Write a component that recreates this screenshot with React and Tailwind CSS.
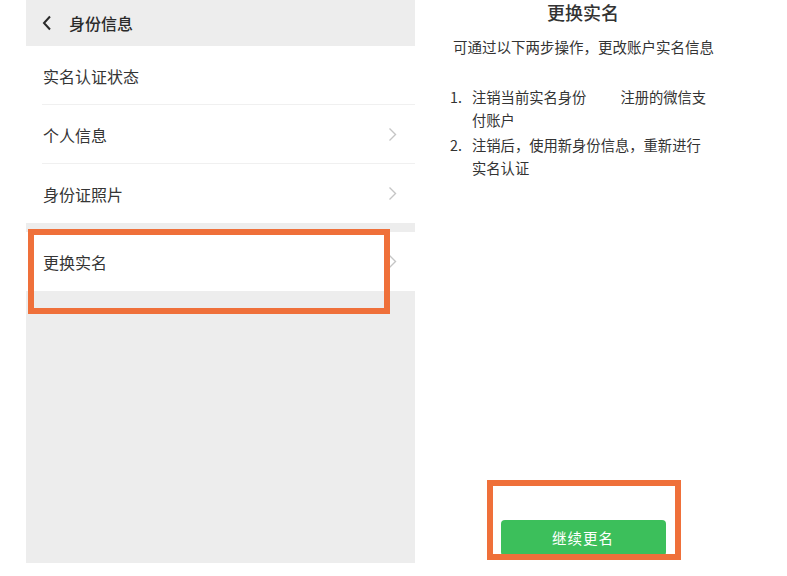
import React from "react";

const Chevron = () => (
  <svg width="9" height="15" viewBox="0 0 9 15" className="shrink-0">
    <polyline points="1.5,1.5 7.5,7.5 1.5,13.5" fill="none" stroke="#c5c5c5" strokeWidth="1.4" />
  </svg>
);

const Row = ({ label, chevron = true, divider = true }) => (
  <div className="relative h-[59px] bg-white flex items-center pl-[17px] pr-[18px]">
    <span className="flex-1 text-[16px] text-[#353535] leading-none">{label}</span>
    {chevron && <Chevron />}
    {divider && <div className="absolute left-[16px] right-0 bottom-0 h-px bg-[#f0f0f0]" />}
  </div>
);

export default function App() {
  return (
    <div
      className="relative w-[787px] h-[576px] bg-white flex overflow-hidden"
      style={{ fontFamily: '"Noto Sans CJK SC", "Noto Sans", sans-serif' }}
    >
      {/* Left panel */}
      <div className="relative ml-[26px] w-[389px] h-[563px] bg-[#ededed] flex flex-col">
        <div className="h-[46px] flex items-center pl-[16px]">
          <svg width="10" height="16" viewBox="0 0 10 16" className="mr-[17px]">
            <polyline points="8,1.5 2,8 8,14.5" fill="none" stroke="#2a2a2a" strokeWidth="2" />
          </svg>
          <span className="text-[16px] font-medium text-[#2a2a2a] leading-none">身份信息</span>
        </div>
        <Row label="实名认证状态" chevron={false} />
        <Row label="个人信息" />
        <Row label="身份证照片" divider={false} />
        <div className="h-[9px]" />
        <Row label="更换实名" divider={false} />
        <div className="absolute left-[2px] top-[229px] w-[362px] h-[85px] border-[6px] border-[#ef703a]" />
      </div>

      {/* Right panel */}
      <div className="relative w-[336px] h-full flex flex-col">
        <div className="pt-[2px] text-center text-[18px] leading-[20px] font-medium text-[#333]">更换实名</div>
        <div className="mt-[15px] pl-[38px] text-[14.5px] leading-[20px] text-[#333]">
          可通过以下两步操作，更改账户实名信息
        </div>
        <div className="mt-[28px] pl-[35px] text-[14.3px] text-[#333]">
          <div className="flex leading-[23px]">
            <span className="w-[22px] shrink-0">1.</span>
            <div>
              <div>
                注销当前实名身份<span className="inline-block w-[34px]" />注册的微信支
              </div>
              <div>付账户</div>
            </div>
          </div>
          <div className="flex leading-[23px] mt-[2px]">
            <span className="w-[22px] shrink-0">2.</span>
            <div>
              <div>注销后，使用新身份信息，重新进行</div>
              <div>实名认证</div>
            </div>
          </div>
        </div>
        <div className="flex-1" />
        <div className="mb-[20px] flex justify-center">
          <button className="w-[165px] h-[36px] rounded-[4px] bg-[#3cbf5b] text-white text-[14.5px] tracking-[1px]">
            继续更名
          </button>
        </div>
      </div>

      <div className="absolute left-[487px] top-[480px] w-[194px] h-[80px] border-[6px] border-[#ef703a]" />
    </div>
  );
}
